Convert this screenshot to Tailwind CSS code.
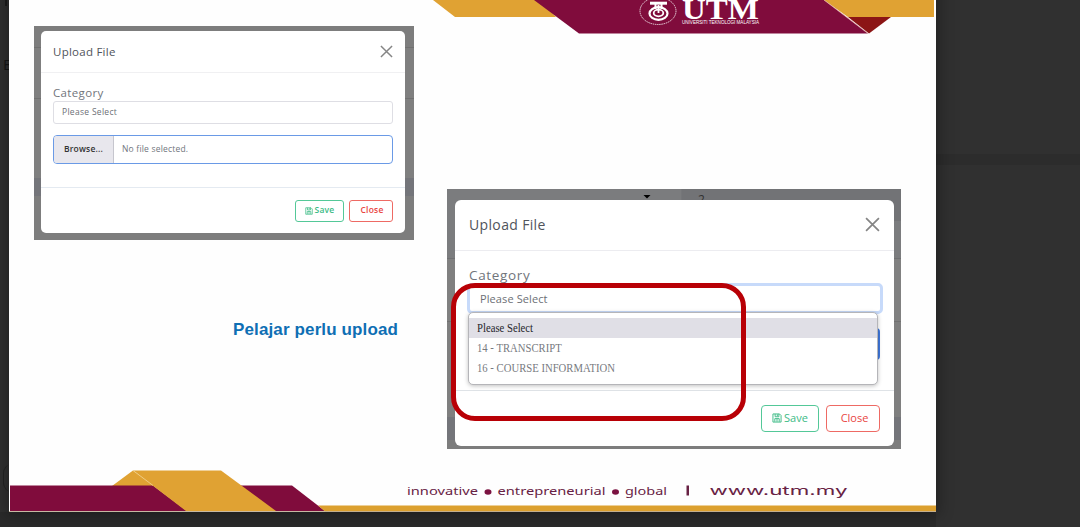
<!DOCTYPE html>
<html lang="ms">
<head>
<meta charset="utf-8">
<title>Upload File</title>
<script src="https://cdn.jsdelivr.net/npm/@tailwindcss/browser@4"></script>
</head>
<body class="bg-[#303030] font-['Open_Sans','Noto_Sans',sans-serif]">
<svg class="hidden">
  <symbol id="save" viewBox="0 0 16 16"><path d="M1.500 1.500H12L14.500 4V14.500H1.500ZM5 1.500V6H11V1.500M8.500 2V5M4.500 14V9H11.500V14M8 9V14" fill="none" stroke="currentColor" stroke-width="1.5"/></symbol>
  <symbol id="x" viewBox="0 0 14 14"><path d="M1 1L13 13M13 1L1 13" fill="none" stroke="#858585" stroke-width="1.6"/></symbol>
</svg>
<div class="relative h-[527px] w-[1080px] overflow-hidden">
  <!-- viewer background -->
  <div class="absolute left-[936px] top-[154px] h-[11px] w-[144px] bg-[#2c2c2c]"></div>
  <div class="absolute left-0 top-[512px] h-[15px] w-[936px] bg-[#2a2a2a]"></div>
  <div class="absolute left-[3px] top-[54px] text-[15px] leading-[20px] text-[#151515]">E</div>
  <div class="absolute left-[5px] top-0 h-[6px] w-[2px] bg-[#1c1c1c]"></div>
  <div class="absolute left-[3px] top-[464px] h-[28px] w-[9px] rounded-l-full border-l border-[#222]"></div>

  <!-- slide -->
  <main class="absolute left-[9px] top-[-10px] h-[522px] w-[927px] bg-[#fefefe] shadow-[0_0_14px_3px_rgba(0,0,0,0.3)]"></main>
  <svg class="absolute left-0 top-0" width="936" height="512" viewBox="0 0 936 512">
    <path d="M433 0H540L556 17H455Z" fill="#e0a233"/>
    <path d="M534 0H824L868 33.500H579Z" fill="#800c3c"/>
    <path d="M848 17H891L869 33.500Z" fill="#8c1515"/>
    <path d="M824 0H934V17H848Z" fill="#e0a233"/>
    <path d="M824 0L868 33.500" stroke="#e3a3a0" stroke-width=".7"/>
    <g fill="none" stroke="#fff">
      <ellipse cx="658" cy="11" rx="18" ry="13.500" stroke-width="1" stroke-dasharray="1.500 .7" opacity=".8"/>
      <path d="M650 3.200H667" stroke-width="3"/>
      <path d="M655.500 4V9M661.500 4V9" stroke-width="2"/>
      <ellipse cx="658.500" cy="13.500" rx="9" ry="6.300" stroke-width="2.200"/>
      <ellipse cx="658.500" cy="13" rx="4.800" ry="3.300" stroke-width="1.800"/>
      <path d="M658.500 5V13" stroke-width="1.800"/>
    </g>
    <text x="682" y="19" textLength="77" lengthAdjust="spacingAndGlyphs" font-family="Liberation Serif" font-weight="700" font-size="29" fill="#fff">UTM</text>
    <text x="682" y="24" textLength="77" lengthAdjust="spacingAndGlyphs" font-family="Liberation Sans" font-size="4.800" fill="#fff">UNIVERSITI TEKNOLOGI MALAYSIA</text>

    <path d="M112 486L133 470.500L155 486Z" fill="#e0a233"/>
    <path d="M10 485.500H153L187 511H10Z" fill="#800c3c"/>
    <path d="M240 485.500H292L325 511H270Z" fill="#800c3c"/>
    <path d="M133 470.500H221L276 511H186Z" fill="#e0a233"/>
    <path d="M133 470.500L153 485.500" stroke="#f2d595" stroke-width=".8"/>
    <path d="M318 505.500H936V511.500H325Z" fill="#dca02f"/>
    <path d="M9 511.500H936" stroke="#b9a78c" stroke-width=".8"/>
    <g font-family="Noto Sans" font-size="11.500" fill="#682244">
      <text x="407" y="495" textLength="71" lengthAdjust="spacingAndGlyphs">innovative</text>
      <ellipse cx="488" cy="492" rx="3.500" ry="2.800" fill="#7b1241"/>
      <text x="497.500" y="495" textLength="108" lengthAdjust="spacingAndGlyphs">entrepreneurial</text>
      <ellipse cx="615.500" cy="492" rx="3.500" ry="2.800" fill="#7b1241"/>
      <text x="625" y="495" textLength="42" lengthAdjust="spacingAndGlyphs">global</text>
      <path d="M686.500 485.500H689V495.500H686.500Z"/>
      <text x="709.500" y="495" textLength="138" lengthAdjust="spacingAndGlyphs" font-family="Inter" font-size="12.500">www.utm.my</text>
    </g>
  </svg>

  <!-- first dialog -->
  <section class="absolute left-[34px] top-[26px] h-[214px] w-[380px] bg-[linear-gradient(#7d7d7d_0_21px,#707070_21px_22px,#7f7f7f_22px_72px,#707070_72px_73px,#7f7f7f_73px_152px,#74757a_152px_170px,#7d7d7d_170px)] pl-[7px] pt-[5px]">
    <div class="flex h-[202px] w-[364px] flex-col rounded-[5px] bg-white">
      <header class="flex h-[42px] items-center justify-between border-b border-[#f0f0f2] pl-3 pr-3">
        <h2 class="text-[11.500px] tracking-[.25px] text-[#50545c]">Upload File</h2>
        <svg class="h-[13px] w-[13px]"><use href="#x"/></svg>
      </header>
      <div class="flex h-[115px] flex-col border-b border-[#e4eaf1] px-[12px] pt-[12px]">
        <label class="h-[16px] text-[11.500px] leading-[16px] tracking-[.35px] text-[#71757c]">Category</label>
        <div class="flex h-[23px] shrink-0 items-center rounded-[3px] border border-[#dedee4] pl-2 text-[8.500px] tracking-[.3px] text-[#6c6f76]">Please Select</div>
        <div class="mt-[11px] flex h-[29px] shrink-0 items-stretch overflow-hidden rounded-[4px] border border-[#6a9ae6] text-[8.500px]">
          <span class="flex w-[60px] items-center justify-center border-r border-[#c6c6ce] bg-[#e8e7ed] font-semibold tracking-[.2px] text-[#333]">Browse...</span>
          <span class="flex items-center pl-2 tracking-[.2px] text-[#71757c]">No file selected.</span>
        </div>
      </div>
      <footer class="flex flex-1 items-center justify-end gap-[5px] pr-3 text-[8.500px] font-semibold tracking-[.2px]">
        <button class="flex h-[22px] w-[49px] items-center justify-center gap-[2px] rounded-[3px] border border-[#54c898] text-[#3dbb86]"><svg class="h-[8px] w-[8px]"><use href="#save"/></svg>Save</button>
        <button class="flex h-[22px] w-[44px] items-center justify-center rounded-[3px] border border-[#ee6a64] pl-[2px] text-[#e9453f]">Close</button>
      </footer>
    </div>
  </section>

  <p class="absolute left-[233px] top-[319px] whitespace-nowrap font-['Liberation_Sans',sans-serif] text-[17px] font-bold leading-[22px] tracking-[.13px] text-[#0e6fb4]">Pelajar perlu upload</p>

  <!-- second dialog -->
  <section class="absolute left-[447px] top-[188.500px] h-[260.500px] w-[454px] bg-[linear-gradient(#7b7c7e_0_69px,#6f7072_69px_70px,#808080_70px_132px,#717171_132px_133px,#7f7f7f_133px_228px,#74757a_228px_251px,#7d7d7d_251px)] pl-[8px] pt-[11.500px]">
    <div class="absolute left-[234px] top-0 h-[32px] w-[220px] border-l border-[#757679] bg-[#727376]"></div>
    <div class="absolute left-[196px] top-[6px] h-[4px] w-[8px] bg-black [clip-path:polygon(0_0,100%_0,50%_100%)]"></div>
    <div class="absolute left-[251px] top-[3px] text-[12px] leading-[15px] text-[#333]">2</div>
    <div class="relative flex h-[245.500px] w-[439px] flex-col rounded-[6px] bg-white">
      <header class="flex h-[51px] items-center justify-between border-b border-[#ececf0] pl-[14px] pr-[14px] pb-px">
        <h2 class="text-[14px] tracking-[.35px] text-[#50545c]">Upload File</h2>
        <svg class="h-[15px] w-[15px]"><use href="#x"/></svg>
      </header>
      <div class="h-[140px] border-b border-[#dfe3e7] px-[12px] pt-[15px]">
        <label class="ml-[2px] block h-[17px] text-[13.500px] leading-[18px] tracking-[.65px] text-[#71757c]">Category</label>
        <div class="flex h-[31px] w-[416px] items-center rounded-[5px] border-[3px] border-[#c7dafa] pl-[10px] pt-px text-[11px] tracking-[.1px] text-[#6c6f76]">Please Select</div>
        <div class="ml-2 mt-[14px] h-[32px] w-[405px] rounded-r-[4px] border-r-2 border-[#3f78dc]"></div>
      </div>
      <footer class="flex flex-1 items-center justify-end gap-[7px] pr-[14px] text-[11px] font-medium">
        <button class="flex h-[27px] w-[58px] items-center justify-center gap-[2px] rounded-[4px] border border-[#54c898] text-[#3dbb86]"><svg class="h-[10px] w-[10px]"><use href="#save"/></svg>Save</button>
        <button class="flex h-[27px] w-[54px] items-center justify-center rounded-[4px] border border-[#ee6a64] pl-[3px] text-[#e9453f]">Close</button>
      </footer>
      <ul class="absolute left-[13px] top-[111.500px] flex h-[73px] w-[410px] flex-col rounded-[5px] border border-[#b5b5b9] bg-white pt-[5px] font-['Liberation_Serif',serif] text-[12px] leading-[20.300px] text-[#777a80] shadow-[0_1px_4px_rgba(0,0,0,0.25)]">
        <li class="bg-[#e0dfe6] pl-2 text-[#26262c]"><span class="inline-block origin-left scale-x-[.89]">Please Select</span></li>
        <li class="pl-2"><span class="inline-block origin-left scale-x-[.89]">14 - TRANSCRIPT</span></li>
        <li class="pl-2"><span class="inline-block origin-left scale-x-[.89]">16 - COURSE INFORMATION</span></li>
      </ul>
    </div>
  </section>
  <div class="absolute left-[451px] top-[283px] h-[138px] w-[295px] rounded-[24px] border-[5px] border-[#b80006]"></div>
</div>
</body>
</html>
